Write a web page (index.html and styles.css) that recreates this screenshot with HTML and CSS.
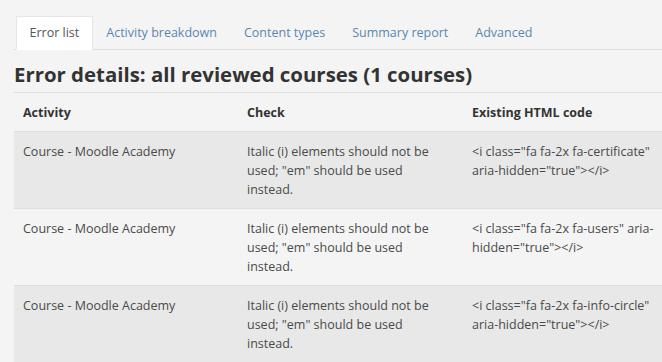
FILE: index.html
```html
<!DOCTYPE html>
<html lang="en">
<head>
  <meta charset="UTF-8">
  <title>Accessibility toolkit - Error list</title>
  <link rel="stylesheet" href="styles.css">
</head>
<body>
  <div class="page">
    <!-- Report tabs -->
    <ul class="tabs">
      <li class="tab active"><a href="#">Error list</a></li>
      <li class="tab"><a href="#">Activity breakdown</a></li>
      <li class="tab"><a href="#">Content types</a></li>
      <li class="tab"><a href="#">Summary report</a></li>
      <li class="tab"><a href="#">Advanced</a></li>
    </ul>

    <h3 class="heading">Error details: all reviewed courses (1 courses)</h3>

    <!-- Error table -->
    <div class="table-wrap">
      <table class="errors">
        <colgroup>
          <col class="col-activity">
          <col class="col-check">
          <col class="col-code">
        </colgroup>
        <thead>
          <tr>
            <th>Activity</th>
            <th>Check</th>
            <th>Existing HTML code</th>
          </tr>
        </thead>
        <tbody>
          <tr>
            <td>Course - Moodle Academy</td>
            <td>Italic (i) elements should not be used; "em" should be used instead.</td>
            <td>&lt;i class="fa fa-2x fa-certificate" aria-hidden="true"&gt;&lt;/i&gt;</td>
          </tr>
          <tr>
            <td>Course - Moodle Academy</td>
            <td>Italic (i) elements should not be used; "em" should be used instead.</td>
            <td>&lt;i class="fa fa-2x fa-users" aria-hidden="true"&gt;&lt;/i&gt;</td>
          </tr>
          <tr>
            <td>Course - Moodle Academy</td>
            <td>Italic (i) elements should not be used; "em" should be used instead.</td>
            <td>&lt;i class="fa fa-2x fa-info-circle" aria-hidden="true"&gt;&lt;/i&gt;</td>
          </tr>
        </tbody>
      </table>
    </div>
  </div>
</body>
</html>
```

FILE: styles.css
```css
* {
  box-sizing: border-box;
  margin: 0;
  padding: 0;
}

body {
  font-family: 'Open Sans', 'Noto Sans', sans-serif;
  font-size: 12.5px;
  line-height: 19px;
  color: #4a4a4a;
  background-color: #f4f4f4;
  overflow: hidden;
}

.page {
  padding: 16px 0 0 14px;
}

/* Tabs */
.tabs {
  display: flex;
  list-style: none;
  padding-left: 2px;
  border-bottom: 1px solid #dedede;
}

.tab {
  margin-bottom: -1px;
}

.tab a {
  display: block;
  padding: 6px 12.5px 7px;
  border: 1px solid transparent;
  color: #5a88ad;
  text-decoration: none;
}

.tab.active a {
  background-color: #fff;
  color: #555;
  border-color: #e6e6e6 #e6e6e6 #fff;
}

.heading {
  font-size: 20.4px;
  font-weight: 700;
  line-height: 24px;
  color: #333;
  margin: 12px 0 6px;
}

/* Table */
.table-wrap {
  overflow: hidden;
}

.errors {
  width: 700px;
  border-collapse: collapse;
  table-layout: fixed;
}

.col-activity { width: 224px; }
.col-check { width: 225px; }
.col-code { width: 251px; }

.errors th,
.errors td {
  text-align: left;
  vertical-align: top;
  padding: 9.5px 9px;
}

.errors th {
  font-weight: 700;
  color: #333;
  border-top: 1px solid #dfdfdf;
}

.errors td {
  border-top: 1px solid #dedede;
}

.errors td:nth-child(2) {
  padding-right: 24px;
}

.errors td:nth-child(3) {
  padding-right: 54px;
}

.errors tbody tr:nth-child(odd) {
  background-color: #e8e8e8;
}
```
